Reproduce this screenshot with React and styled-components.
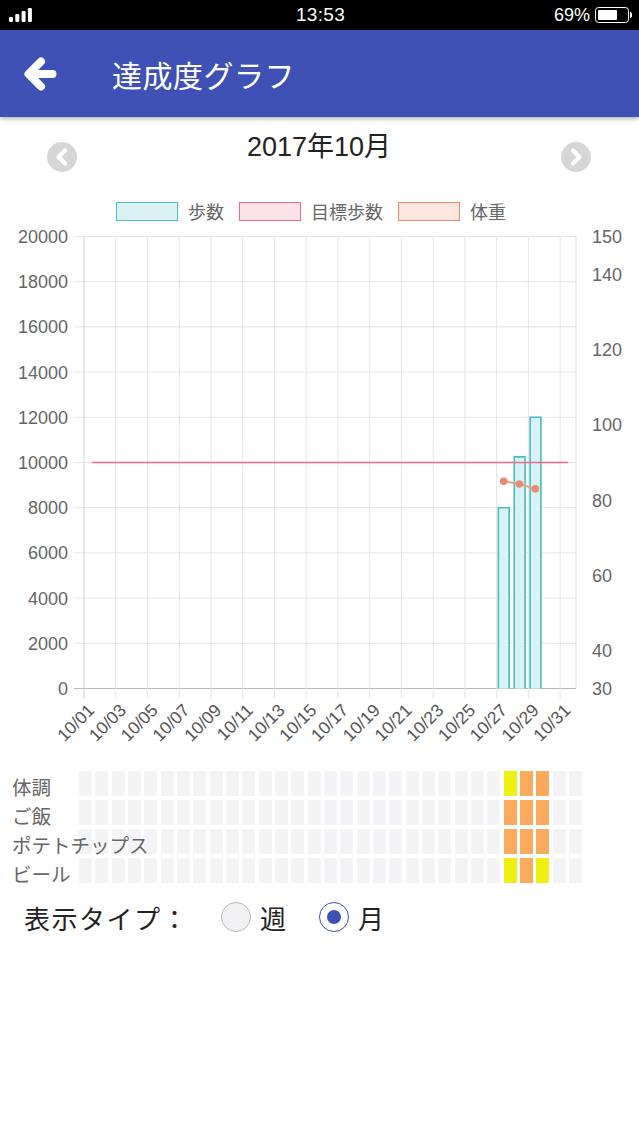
import React from 'react'
import styled, { createGlobalStyle } from 'styled-components'

const GlobalStyle = createGlobalStyle`
  body {
    margin: 0;
    background: #fff;
    font-family: "Liberation Sans", "Noto Sans CJK JP", sans-serif;
  }
`

// chart geometry (page px, svg uses the same coordinates through its viewBox)
const PLOT_L = 84
const PLOT_R = 576
const PLOT_T = 236.5
const PLOT_B = 688.5
const CW = (PLOT_R - PLOT_L) / 31
const stepY = v => PLOT_B - (v / 20000) * (PLOT_B - PLOT_T)
const weightY = w => PLOT_B - ((w - 30) / 120) * (PLOT_B - PLOT_T)
const centerX = i => PLOT_L + CW * (i + 0.5)

const steps = { 26: 8000, 27: 10250, 28: 12000 }
const weights = [
  { i: 26, w: 85 },
  { i: 27, w: 84.3 },
  { i: 28, w: 83 },
]

const heatRows = [
  { label: '体調', tones: { 26: 'y', 27: 'o', 28: 'o' } },
  { label: 'ご飯', tones: { 26: 'o', 27: 'o', 28: 'o' } },
  { label: 'ポテトチップス', tones: { 26: 'o', 27: 'o', 28: 'o' } },
  { label: 'ビール', tones: { 26: 'y', 27: 'o', 28: 'y' } },
]

const toneColors = { y: '#eef014', o: '#f9aa5c', n: '#f4f3f6' }

const pad = n => String(n).padStart(2, '0')

const Page = styled.div`
  width: 639px;
  min-height: 1136px;
  background: #fff;
`

const StatusBar = styled.div`
  height: 30px;
  background: #000;
  color: #fff;
  display: grid;
  grid-template-columns: 1fr auto 1fr;
  align-items: center;
  padding: 0 7px 0 9px;
`

const Clock = styled.span`
  font-size: 19px;
  font-weight: 500;
  letter-spacing: 0.3px;
`

const StatusRight = styled.div`
  display: flex;
  justify-content: flex-end;
  align-items: center;
  gap: 5px;
  font-size: 18px;
`

const Battery = styled.span`
  display: flex;
  align-items: center;
`

const BatteryBody = styled.span`
  width: 34px;
  height: 16px;
  box-sizing: border-box;
  border: 1.5px solid #fff;
  border-radius: 3.5px;
  padding: 2px;
  display: flex;
`

const BatteryFill = styled.span`
  width: 69%;
  background: #fff;
  border-radius: 1px;
`

const BatteryNub = styled.span`
  width: 2px;
  height: 6px;
  background: #fff;
  border-radius: 0 2px 2px 0;
  margin-left: 1px;
`

const AppBar = styled.header`
  height: 87px;
  background: #3f51b5;
  display: flex;
  align-items: center;
  box-shadow: 0 2px 4px rgba(0, 0, 0, 0.28);
  position: relative;
  z-index: 1;
`

const BackButton = styled.button`
  margin-left: 24px;
  width: 33px;
  height: 34px;
  padding: 0;
  border: none;
  background: none;
  display: flex;
`

const Title = styled.h1`
  margin: 0 0 0 55px;
  font-family: "Noto Sans CJK JP", sans-serif;
  font-size: 30px;
  font-weight: 400;
  color: #fff;
  letter-spacing: 0.5px;
`

const MonthNav = styled.div`
  height: 84px;
  display: flex;
  justify-content: space-between;
  align-items: flex-start;
  padding: 0 48px 0 47px;
`

const NavButton = styled.button`
  margin-top: 25px;
  width: 30px;
  height: 30px;
  border-radius: 50%;
  border: none;
  padding: 0;
  background: #d6d6d6;
  display: flex;
`

const MonthTitle = styled.h2`
  margin: 15px 0 0;
  font-size: 27px;
  line-height: 30px;
  font-weight: 400;
  color: #222;
`

const Legend = styled.div`
  height: 20px;
  display: flex;
  align-items: center;
  gap: 15px;
  padding-left: 116px;
`

const LegendItem = styled.div`
  display: flex;
  align-items: center;
  gap: 10px;
  font-family: "Noto Sans CJK JP", sans-serif;
  font-size: 18px;
  color: #666;
`

const LegendBox = styled.span`
  width: 62px;
  height: 19px;
  box-sizing: border-box;
  border: 1.5px solid ${p => p.$stroke};
  background: ${p => p.$fill};
`

const ChartSvg = styled.svg`
  display: block;
  font-family: "Liberation Sans", sans-serif;
`

const Heatmap = styled.div`
  display: flex;
  flex-direction: column;
  gap: 4px;
  padding-left: 12px;
`

const HeatRow = styled.div`
  display: flex;
  height: 25px;
`

const RowLabel = styled.span`
  width: 67px;
  flex: none;
  height: 25px;
  line-height: 31px;
  font-family: "Noto Sans CJK JP", sans-serif;
  font-size: 19.5px;
  color: #666;
  white-space: nowrap;
  position: relative;
  z-index: 1;
`

const Cells = styled.div`
  width: 503px;
  display: grid;
  grid-template-columns: repeat(31, 1fr);
  column-gap: 3.3px;
`

const Cell = styled.div`
  background: ${p => toneColors[p.$tone]};
`

const TypeRow = styled.div`
  height: 68px;
  display: flex;
  align-items: center;
  padding-left: 24px;
  font-family: "Noto Sans CJK JP", sans-serif;
  font-size: 26px;
  color: #222;
`

const TypeLabel = styled.span`
  letter-spacing: 1.5px;
  margin-right: 32px;
`

const RadioOption = styled.label`
  display: flex;
  align-items: center;
  gap: 9px;
  margin-right: 33px;
`

const RadioCircle = styled.span`
  width: 30px;
  height: 30px;
  box-sizing: border-box;
  border-radius: 50%;
  border: 1.5px solid ${p => (p.$checked ? '#3f51b5' : '#bdbdbd')};
  background: ${p => (p.$checked ? '#fff' : '#f1f1f3')};
  display: flex;
  align-items: center;
  justify-content: center;
`

const RadioDot = styled.span`
  width: 14px;
  height: 14px;
  border-radius: 50%;
  background: #3f51b5;
`

const Signal = () => (
  <svg width="28" height="16" viewBox="0 0 28 16">
    {[5, 8, 11, 14].map((h, i) => (
      <rect key={i} x={i * 6.3} y={15 - h} width="4" height={h} rx="1.2" fill="#fff" />
    ))}
  </svg>
)

const Chevron = ({ dir }) => (
  <svg width="30" height="30" viewBox="0 0 30 30">
    <path
      d={dir === 'left' ? 'M18 8.5 L11.5 15 L18 21.5' : 'M12 8.5 L18.5 15 L12 21.5'}
      fill="none"
      stroke="#fff"
      strokeWidth="4.2"
      strokeLinecap="round"
      strokeLinejoin="round"
    />
  </svg>
)

const Chart = () => {
  const gridColor = '#e6e4ea'
  const leftTicks = Array.from({ length: 11 }, (_, k) => k * 2000)
  const rightTicks = [30, 40, 60, 80, 100, 120, 140, 150]
  const weightPts = weights.map(p => [centerX(p.i) - 1, weightY(p.w)])
  return (
    <ChartSvg width="639" height="550" viewBox="0 221 639 550">
      {leftTicks.map(v => (
        <line key={v} x1={PLOT_L - 10} x2={PLOT_R} y1={stepY(v)} y2={stepY(v)}
          stroke={v === 0 ? '#b8b8b8' : gridColor} strokeWidth="1" />
      ))}
      {Array.from({ length: 16 }, (_, k) => k * 2).map(b => (
        <line key={b} x1={PLOT_L + CW * b} x2={PLOT_L + CW * b} y1={PLOT_T} y2={PLOT_B + 10}
          stroke={b === 0 ? '#d2d2d2' : gridColor} strokeWidth="1" />
      ))}
      <line x1={PLOT_R} x2={PLOT_R} y1={PLOT_T} y2={PLOT_B} stroke="#dedede" strokeWidth="1" />

      {leftTicks.map(v => (
        <text key={v} x="68" y={stepY(v)} dy="0.36em" textAnchor="end" fontSize="18" fill="#666">{v}</text>
      ))}
      {rightTicks.map(w => (
        <text key={w} x="592" y={weightY(w)} dy="0.36em" fontSize="18" fill="#666">{w}</text>
      ))}
      {Array.from({ length: 16 }, (_, k) => k * 2).map(i => (
        <text key={i} fontSize="17.5" fill="#555" textAnchor="end" dy="0.36em"
          transform={`translate(${centerX(i) - 1} 707) rotate(-45)`}>
          {`10/${pad(i + 1)}`}
        </text>
      ))}

      {Object.entries(steps).map(([i, v]) => {
        const cx = centerX(Number(i)) - 0.8
        const x0 = cx - 5.4
        const x1 = cx + 5.4
        const y = stepY(v)
        return (
          <g key={i}>
            <rect x={x0} y={y} width={x1 - x0} height={PLOT_B - y} fill="#dbf2f4" />
            <path d={`M${x0} ${PLOT_B} V${y} H${x1} V${PLOT_B}`} fill="none" stroke="#48bcc4" strokeWidth="1.6" />
          </g>
        )
      })}

      <line x1={centerX(0)} x2={centerX(30)} y1={stepY(10000)} y2={stepY(10000)} stroke="#f2678a" strokeWidth="1.6" />

      <polyline points={weightPts.map(p => p.join(',')).join(' ')} fill="none" stroke="#f0a27e" strokeWidth="2" />
      {weightPts.map(([x, y], k) => (
        <circle key={k} cx={x} cy={y} r="3.8" fill="#e98b72" />
      ))}
    </ChartSvg>
  )
}

const App = () => {
  return (
    <Page>
      <GlobalStyle />
      <StatusBar>
        <Signal />
        <Clock>13:53</Clock>
        <StatusRight>
          <span>69%</span>
          <Battery>
            <BatteryBody><BatteryFill /></BatteryBody>
            <BatteryNub />
          </Battery>
        </StatusRight>
      </StatusBar>

      <AppBar>
        <BackButton aria-label="back">
          <svg width="33" height="34" viewBox="0 0 33 34">
            <path d="M28.5 17 H5 M17 4.5 L4.5 17 L17 29.5" fill="none" stroke="#fff"
              strokeWidth="8" strokeLinecap="round" strokeLinejoin="round" />
          </svg>
        </BackButton>
        <Title>達成度グラフ</Title>
      </AppBar>

      <MonthNav>
        <NavButton aria-label="prev"><Chevron dir="left" /></NavButton>
        <MonthTitle>2017年10月</MonthTitle>
        <NavButton aria-label="next"><Chevron dir="right" /></NavButton>
      </MonthNav>

      <Legend>
        <LegendItem><LegendBox $stroke="#4bbfc6" $fill="#dbf2f4" />歩数</LegendItem>
        <LegendItem><LegendBox $stroke="#f2678a" $fill="#fde1e8" />目標歩数</LegendItem>
        <LegendItem><LegendBox $stroke="#ef8a6c" $fill="#fde6de" />体重</LegendItem>
      </Legend>

      <Chart />

      <Heatmap>
        {heatRows.map(row => (
          <HeatRow key={row.label}>
            <RowLabel>{row.label}</RowLabel>
            <Cells>
              {Array.from({ length: 31 }, (_, i) => (
                <Cell key={i} $tone={row.tones[i] || 'n'} />
              ))}
            </Cells>
          </HeatRow>
        ))}
      </Heatmap>

      <TypeRow>
        <TypeLabel>表示タイプ：</TypeLabel>
        <RadioOption>
          <RadioCircle />
          週
        </RadioOption>
        <RadioOption>
          <RadioCircle $checked><RadioDot /></RadioCircle>
          月
        </RadioOption>
      </TypeRow>
    </Page>
  )
}

export default App
